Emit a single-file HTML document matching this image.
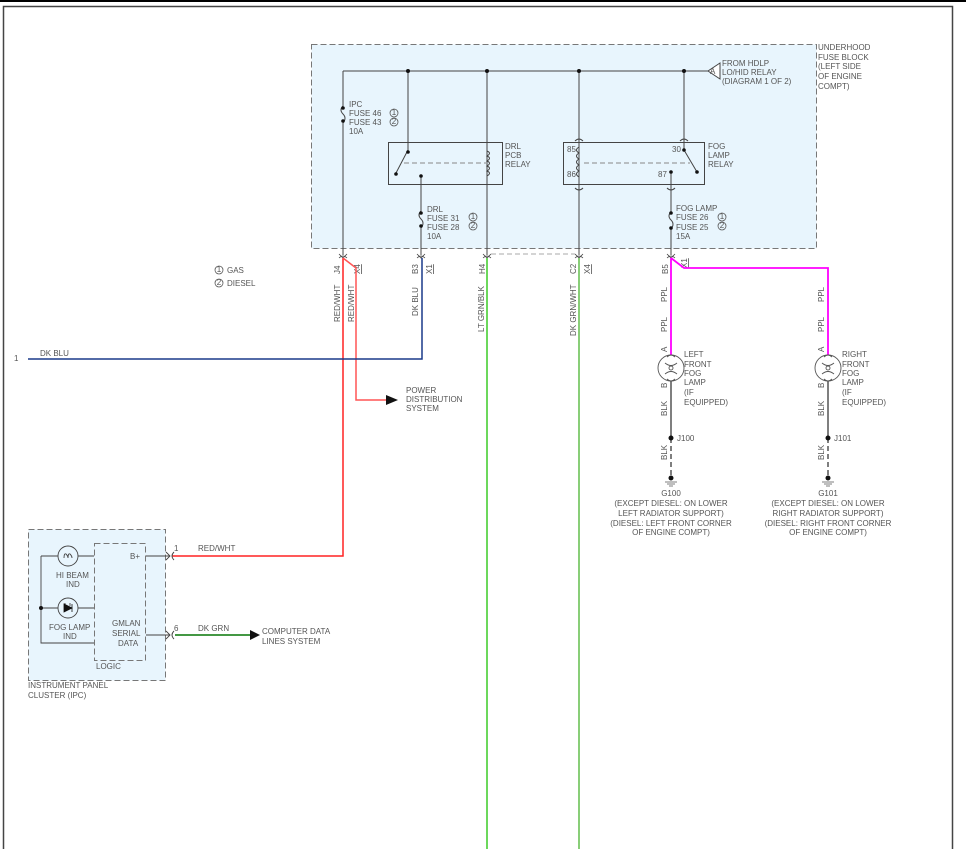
<!DOCTYPE html>
<html><head><meta charset="utf-8"><style>
html,body{margin:0;padding:0;background:#fff;width:966px;height:849px;overflow:hidden}
svg{display:block}
text{font-family:"Liberation Sans",sans-serif;font-size:8px;fill:#555}
</style></head><body>
<svg width="966" height="849" viewBox="0 0 966 849" xmlns="http://www.w3.org/2000/svg">
<rect x="0" y="0" width="966" height="2" fill="#000"/>
<path d="M3.5 849V6.5H952.5V849" fill="none" stroke="#444" stroke-width="1.5"/>

<!-- fuse block -->
<rect x="311.5" y="44.5" width="505" height="204" fill="#e8f5fd" stroke="#777" stroke-dasharray="6,3"/>
<g stroke="#444" stroke-width="1" fill="none">
<path d="M343 71H708"/>
<path d="M720 63L708 71L720 79Z" fill="#fff"/>
<path d="M343 71V106M343 123V255"/>
<path d="M343 106q-4 4 0 8q4 4 0 9"/>
<path d="M408 71V150L396 173"/>
<path d="M421 176V211M421 228V255"/>
<path d="M421 211q-4 4 0 8q4 4 0 9"/>
<path d="M487 71V255"/>
<path d="M487 151q5 2 0 5q5 2 0 5q5 2 0 5q5 2 0 5q5 2 0 5"/>
<path d="M579 71V255"/>
<path d="M579 147q-5 3 0 6q-5 3 0 6q-5 3 0 6q-5 3 0 6q-5 3 0 6"/>
<path d="M684 71V150L697 172"/>
<path d="M671 172V212M671 229V255"/>
<path d="M671 212q-4 4 0 8q4 4 0 9"/>
<path d="M575 141q4-4 8 0M575 188q4 4 8 0M680 141q4-4 8 0M667 188q4 4 8 0"/>
<rect x="388.5" y="142.5" width="114" height="42"/>
<rect x="563.5" y="142.5" width="141" height="42"/>
</g>
<path d="M404 163H486M584 163H690" stroke="#888" stroke-dasharray="5,3" fill="none"/>
<g fill="#111">
<circle cx="408" cy="71" r="2"/><circle cx="487" cy="71" r="2"/><circle cx="579" cy="71" r="2"/><circle cx="684" cy="71" r="2"/>
<circle cx="343" cy="108" r="1.8"/><circle cx="343" cy="121" r="1.8"/>
<circle cx="408" cy="152" r="1.8"/><circle cx="396" cy="174" r="1.8"/><circle cx="421" cy="176" r="1.8"/>
<circle cx="421" cy="213" r="1.8"/><circle cx="421" cy="226" r="1.8"/>
<circle cx="684" cy="150" r="1.8"/><circle cx="697" cy="172" r="1.8"/><circle cx="671" cy="172" r="1.8"/>
<circle cx="671" cy="213" r="1.8"/><circle cx="671" cy="228" r="1.8"/>
</g>
<text x="722" y="66">FROM HDLP</text><text x="722" y="75">LO/HID RELAY</text><text x="722" y="84">(DIAGRAM 1 OF 2)</text>
<text x="818" y="50">UNDERHOOD</text><text x="818" y="60">FUSE BLOCK</text><text x="818" y="69">(LEFT SIDE</text><text x="818" y="79">OF ENGINE</text><text x="818" y="89">COMPT)</text>
<text x="710" y="74" font-size="7">A</text>
<text x="349" y="107">IPC</text><text x="349" y="116">FUSE 46</text><text x="349" y="125">FUSE 43</text><text x="349" y="134">10A</text>
<text x="427" y="212">DRL</text><text x="427" y="221">FUSE 31</text><text x="427" y="230">FUSE 28</text><text x="427" y="239">10A</text>
<text x="676" y="211">FOG LAMP</text><text x="676" y="220">FUSE 26</text><text x="676" y="230">FUSE 25</text><text x="676" y="239">15A</text>
<text x="505" y="149">DRL</text><text x="505" y="158">PCB</text><text x="505" y="167">RELAY</text>
<text x="708" y="149">FOG</text><text x="708" y="158">LAMP</text><text x="708" y="167">RELAY</text>
<text x="567" y="152">85</text><text x="567" y="177">86</text><text x="672" y="152">30</text><text x="658" y="177">87</text>
<g fill="none" stroke="#555" stroke-width="0.8">
<circle cx="394" cy="113" r="4"/><circle cx="394" cy="122" r="4"/>
<circle cx="473" cy="217" r="4"/><circle cx="473" cy="226" r="4"/>
<circle cx="722" cy="217" r="4"/><circle cx="722" cy="226" r="4"/>
<circle cx="219" cy="270" r="4"/><circle cx="219" cy="283" r="4"/>
</g>
<g font-size="6" text-anchor="middle">
<text x="394" y="115">1</text><text x="394" y="124">2</text><text x="473" y="219">1</text><text x="473" y="228">2</text>
<text x="722" y="219">1</text><text x="722" y="228">2</text><text x="219" y="272">1</text><text x="219" y="285">2</text>
</g>
<text x="227" y="273">GAS</text><text x="227" y="286">DIESEL</text>

<!-- connectors -->
<g stroke="#444" fill="none" stroke-width="0.8">
<path d="M339 254l4 4l4-4M339 258q4-4 8 0"/><path d="M417 254l4 4l4-4M417 258q4-4 8 0"/>
<path d="M483 254l4 4l4-4M483 258q4-4 8 0"/><path d="M575 254l4 4l4-4M575 258q4-4 8 0"/>
<path d="M667 254l4 4l4-4M667 258q4-4 8 0"/>
</g>
<path d="M491 254H575" stroke="#aaa" stroke-dasharray="5,3"/>
<g font-size="8">
<text transform="translate(340 274) rotate(-90)">J4</text><text transform="translate(360 274) rotate(-90)" text-decoration="underline">X4</text>
<text transform="translate(418 274) rotate(-90)">B3</text><text transform="translate(432 274) rotate(-90)" text-decoration="underline">X1</text>
<text transform="translate(485 274) rotate(-90)">H4</text>
<text transform="translate(576 274) rotate(-90)">C2</text><text transform="translate(590 274) rotate(-90)" text-decoration="underline">X4</text>
<text transform="translate(668 274) rotate(-90)">B5</text><text transform="translate(687 268) rotate(-90)" text-decoration="underline">X1</text>
<text transform="translate(340 322) rotate(-90)">RED/WHT</text><text transform="translate(354 322) rotate(-90)">RED/WHT</text>
<text transform="translate(418 316) rotate(-90)">DK BLU</text>
<text transform="translate(484 332) rotate(-90)">LT GRN/BLK</text>
<text transform="translate(576 336) rotate(-90)">DK GRN/WHT</text>
<text transform="translate(667 302) rotate(-90)">PPL</text><text transform="translate(667 332) rotate(-90)">PPL</text>
<text transform="translate(824 302) rotate(-90)">PPL</text><text transform="translate(824 332) rotate(-90)">PPL</text>
<text transform="translate(667 352) rotate(-90)">A</text><text transform="translate(824 352) rotate(-90)">A</text>
<text transform="translate(667 388) rotate(-90)">B</text><text transform="translate(824 388) rotate(-90)">B</text>
<text transform="translate(667 416) rotate(-90)">BLK</text><text transform="translate(824 416) rotate(-90)">BLK</text>
<text transform="translate(667 460) rotate(-90)">BLK</text><text transform="translate(824 460) rotate(-90)">BLK</text>
</g>

<!-- wires -->
<path d="M343 258V556H172" stroke="#f22" stroke-width="1.5" fill="none"/>
<path d="M343 258L356 268V400H388" stroke="#f55" stroke-width="1.5" fill="none"/>
<path d="M386 395L398 400L386 405Z" fill="#111"/>
<text x="406" y="393">POWER</text><text x="406" y="402">DISTRIBUTION</text><text x="406" y="411">SYSTEM</text>
<path d="M422 258V359H28" stroke="#1a3a8a" stroke-width="1.5" fill="none"/>
<text x="14" y="361">1</text><text x="40" y="356">DK BLU</text>
<path d="M487 258V849" stroke="#5cd44a" stroke-width="1.8"/>
<path d="M579 258V849" stroke="#7cc86a" stroke-width="1.8"/>
<path d="M671 258V355M671 258L684 268H828V355" stroke="#f0f" stroke-width="1.8" fill="none"/>

<!-- lamps -->
<g stroke="#555" fill="none" stroke-width="0.9">
<circle cx="671" cy="368" r="13"/><circle cx="828" cy="368" r="13"/>
<path d="M667 357q4-4 8 0M667 379q4 4 8 0M824 357q4-4 8 0M824 379q4 4 8 0"/>
<path d="M665 363q6 5 12 0M665 374q6-5 12 0M822 363q6 5 12 0M822 374q6-5 12 0"/>
<circle cx="671" cy="368" r="2"/><circle cx="828" cy="368" r="2"/>
</g>
<path d="M671 381V438M828 381V438" stroke="#555" stroke-width="1.5"/>
<path d="M671 438V478M828 438V478" stroke="#555" stroke-width="1.5" stroke-dasharray="5,3"/>
<g fill="#111"><circle cx="671" cy="438" r="2.5"/><circle cx="828" cy="438" r="2.5"/><circle cx="671" cy="478" r="2.5"/><circle cx="828" cy="478" r="2.5"/></g>
<path d="M665 482h12M667 484h8M669 486h4M822 482h12M824 484h8M826 486h4" stroke="#555" stroke-width="0.8"/>
<text x="684" y="357">LEFT</text><text x="684" y="367">FRONT</text><text x="684" y="376">FOG</text><text x="684" y="385">LAMP</text><text x="684" y="395">(IF</text><text x="684" y="405">EQUIPPED)</text>
<text x="842" y="357">RIGHT</text><text x="842" y="367">FRONT</text><text x="842" y="376">FOG</text><text x="842" y="385">LAMP</text><text x="842" y="395">(IF</text><text x="842" y="405">EQUIPPED)</text>
<text x="677" y="441">J100</text><text x="834" y="441">J101</text>
<g text-anchor="middle">
<text x="671" y="496">G100</text><text x="671" y="506">(EXCEPT DIESEL: ON LOWER</text><text x="671" y="516">LEFT RADIATOR SUPPORT)</text><text x="671" y="526">(DIESEL: LEFT FRONT CORNER</text><text x="671" y="535">OF ENGINE COMPT)</text>
<text x="828" y="496">G101</text><text x="828" y="506">(EXCEPT DIESEL: ON LOWER</text><text x="828" y="516">RIGHT RADIATOR SUPPORT)</text><text x="828" y="526">(DIESEL: RIGHT FRONT CORNER</text><text x="828" y="535">OF ENGINE COMPT)</text>
</g>

<!-- IPC -->
<rect x="28.5" y="529.5" width="137" height="151" fill="#e8f5fd" stroke="#777" stroke-dasharray="6,3"/>
<rect x="94.5" y="543.5" width="51" height="117" fill="none" stroke="#777" stroke-dasharray="6,3"/>
<g stroke="#444" fill="none" stroke-width="0.9">
<path d="M41 556H58M78 556H94M41 556V643H94M41 608H58M78 608H94"/>
<circle cx="68" cy="556" r="10"/><circle cx="68" cy="608" r="10"/>
<path d="M64 558q0-5 2-4q2 2 2 4q0-5 2-4q2 2 2 4"/>
<path d="M146 556H170M146 635H170M166 552l4 4l-4 4M166 631l4 4l-4 4M174 552q-4 4 0 8M174 631q-4 4 0 8"/>
<path d="M65 603v3M70 603v3"/>
</g>
<path d="M64 604L72 608L64 612Z M72 604V612" fill="#111" stroke="#111" stroke-width="0.8"/>
<circle cx="41" cy="608" r="2" fill="#111"/>
<text x="56" y="578">HI BEAM</text><text x="66" y="587">IND</text>
<text x="49" y="630">FOG LAMP</text><text x="63" y="639">IND</text>
<text x="130" y="559">B+</text>
<text x="112" y="626">GMLAN</text><text x="112" y="636">SERIAL</text><text x="118" y="646">DATA</text>
<text x="96" y="669">LOGIC</text>
<text x="28" y="688">INSTRUMENT PANEL</text><text x="28" y="698">CLUSTER (IPC)</text>
<text x="174" y="551">1</text><text x="198" y="551">RED/WHT</text>
<text x="174" y="631">6</text><text x="198" y="631">DK GRN</text>
<path d="M175 635H252" stroke="#2a8a2a" stroke-width="1.8"/>
<path d="M250 630L260 635L250 640Z" fill="#111"/>
<text x="262" y="634">COMPUTER DATA</text><text x="262" y="644">LINES SYSTEM</text>
</svg>
</body></html>
